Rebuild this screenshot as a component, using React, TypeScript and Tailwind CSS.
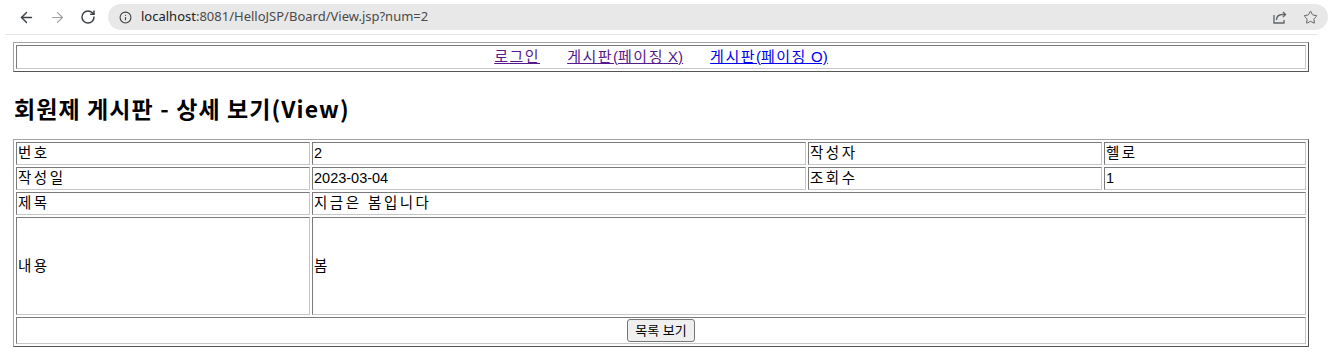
import { ArrowLeft, ArrowRight, RotateCw, Info, Star } from "lucide-react";

const cell =
  "border border-t-[#7a7a7a] border-l-[#7a7a7a] border-b-[#c6c6c6] border-r-[#c6c6c6] p-[1px]";
const tableCls =
  "w-[1296px] border-separate border-spacing-[2px] border border-t-[#a3a3a3] border-l-[#a3a3a3] border-b-[#555555] border-r-[#555555]";
// Korean runs get extra tracking so they take the width of the original font
const ko = "tracking-[2.5px]";

const ShareIcon = () => (
  <svg width="16" height="16" viewBox="0 0 16 16" fill="none" stroke="#5f6368" strokeWidth="1.3">
    <path d="M2 6v8h10v-3" />
    <path d="M4.5 11c0-3.5 2.5-5.5 6-5.5h2.5" />
    <path d="M11 3l2.5 2.5L11 8" />
  </svg>
);

const BrowserBar = () => (
  <div className="h-[35px]">
    <div className="h-[34px] flex items-center pl-[18px]">
      <ArrowLeft size={17} strokeWidth={2} color="#3c4043" />
      <div className="w-[14px]" />
      <ArrowRight size={17} strokeWidth={1.6} color="#a0a0a0" />
      <div className="w-[14px]" />
      <RotateCw size={16} strokeWidth={2.2} color="#3c4043" />
      <div className="ml-[12px] h-[26px] flex-1 mr-[1px] rounded-full bg-[#e8e8e8] flex items-center pl-[11px] pr-[10px]">
        <Info size={13} strokeWidth={2} color="#3c4043" />
        <span className="ml-[9px] font-['Noto_Sans',sans-serif] text-[13px] text-[#202124]">
          localhost<span className="text-[#4a4a4a]">:8081/HelloJSP/Board/View.jsp?num=2</span>
        </span>
        <div className="flex-1" />
        <ShareIcon />
        <div className="w-[15px]" />
        <Star size={15} strokeWidth={1.6} color="#5f6368" />
      </div>
    </div>
    <div className="ml-[5px] mr-[11px] h-[1px] bg-[#e6e6e6]" />
  </div>
);

export default function App() {
  return (
    <div className="w-[1329px] h-[357px] bg-white overflow-hidden font-['Liberation_Sans','Noto_Sans_CJK_KR',sans-serif] text-black">
      <BrowserBar />
      <div className="pl-[13px] pt-[7px]">
        <table className={tableCls}>
          <tbody>
            <tr>
              <td className={`${cell} text-center text-[15px] leading-[20px]`}>
                <div className="flex justify-center gap-[27px]">
                  <a href="#" className="underline text-[#551a8b]">
                    <span className="tracking-[1.5px]">로그인</span>
                  </a>
                  <a href="#" className="underline text-[#551a8b]">
                    <span className="tracking-[1.5px]">게시판</span>(<span className="tracking-[1.5px]">페이징</span> X)
                  </a>
                  <a href="#" className="underline text-[#0000ee]">
                    <span className="tracking-[1.5px]">게시판</span>(<span className="tracking-[1.5px]">페이징</span> O)
                  </a>
                </div>
              </td>
            </tr>
          </tbody>
        </table>

        <h2 className="mt-[22px] mb-[17px] pl-[1px] text-[23px] leading-[28px] font-bold tracking-[1.1px] font-['Noto_Sans_CJK_KR','Liberation_Sans',sans-serif]">
          회원제 게시판 - 상세 보기(View)
        </h2>

        <table className={`${tableCls} table-fixed text-[14.5px] leading-[19px]`}>
          <tbody>
            <tr>
              <td className={`${cell} ${ko} w-[294px]`}>번호</td>
              <td className={`${cell} w-[494px]`}>2</td>
              <td className={`${cell} ${ko} w-[294px]`}>작성자</td>
              <td className={`${cell} ${ko} w-[202px]`}>헬로</td>
            </tr>
            <tr>
              <td className={`${cell} ${ko}`}>작성일</td>
              <td className={cell}>2023-03-04</td>
              <td className={`${cell} ${ko}`}>조회수</td>
              <td className={cell}>1</td>
            </tr>
            <tr>
              <td className={`${cell} ${ko}`}>제목</td>
              <td className={`${cell} ${ko}`} colSpan={3}>지금은 봄입니다</td>
            </tr>
            <tr>
              <td className={`${cell} ${ko} h-[98px]`}>내용</td>
              <td className={`${cell} ${ko} h-[98px]`} colSpan={3}>봄</td>
            </tr>
            <tr>
              <td className={`${cell} text-center`} colSpan={4}>
                <button className="h-[23px] px-[7px] text-[13px] leading-[19px] bg-[#efefef] border border-[#767676] rounded-[3px]">
                  목록 보기
                </button>
              </td>
            </tr>
          </tbody>
        </table>
      </div>
    </div>
  );
}
